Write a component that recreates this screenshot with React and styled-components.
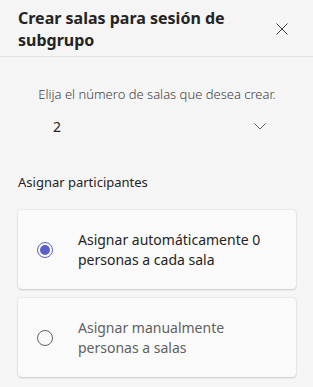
import React, { useState } from 'react';
import styled, { createGlobalStyle } from 'styled-components';

const GlobalStyle = createGlobalStyle`
  html, body {
    margin: 0;
    padding: 0;
    background: #f5f5f5;
  }
  body {
    font-family: "Noto Sans", "Open Sans", sans-serif;
    color: #242424;
  }
`;

const Panel = styled.div`
  width: 313px;
  height: 387px;
  background: #f5f5f5;
  overflow: hidden;
`;

const Header = styled.div`
  display: flex;
  align-items: flex-start;
  justify-content: space-between;
  height: 57px;
  box-sizing: border-box;
  padding: 7px 24px 0 18px;
  border-bottom: 1px solid #e0e0e0;
`;

const Title = styled.h1`
  margin: 0;
  font-size: 16px;
  font-weight: 700;
  line-height: 22px;
  width: 220px;
  color: #242424;
`;

const CloseButton = styled.button`
  border: 0;
  background: none;
  padding: 0;
  margin-top: 15px;
  width: 14px;
  height: 14px;
  display: flex;
  align-items: center;
  justify-content: center;
  cursor: pointer;
`;

const Body = styled.div`
  padding: 0 17px 0 18px;
`;

const Prompt = styled.p`
  margin: 28px 0 0;
  text-align: center;
  font-size: 13px;
  font-weight: 300;
  line-height: 18px;
  color: #424242;
`;

const Select = styled.div`
  display: flex;
  align-items: center;
  justify-content: space-between;
  margin: 13px 30px 0 35px;
  height: 20px;
  font-size: 14px;
  color: #242424;
`;

const SectionLabel = styled.div`
  margin-top: 37px;
  font-size: 13px;
  font-weight: 400;
  line-height: 18px;
  color: #242424;
`;

const Options = styled.div`
  display: flex;
  flex-direction: column;
  gap: 9px;
  margin-top: 19px;
`;

const Card = styled.label`
  display: flex;
  align-items: center;
  height: 79px;
  box-sizing: border-box;
  padding: 0 20px 0 19px;
  background: #fafafa;
  border-radius: 4px;
  box-shadow: 0 0 2px rgba(0, 0, 0, 0.12), 0 1px 2px rgba(0, 0, 0, 0.14);
  cursor: pointer;
`;

const Radio = styled.span`
  flex: none;
  width: 16px;
  height: 16px;
  box-sizing: border-box;
  border-radius: 50%;
  border: 1px solid ${(p) => (p.checked ? '#5b5fc7' : '#616161')};
  display: flex;
  align-items: center;
  justify-content: center;
  margin-right: 25px;
  &::after {
    content: '';
    width: 10px;
    height: 10px;
    border-radius: 50%;
    background: ${(p) => (p.checked ? '#5b5fc7' : 'transparent')};
  }
`;

const OptionText = styled.span`
  font-size: 14px;
  line-height: 20px;
  font-weight: 400;
  color: ${(p) => (p.checked ? '#242424' : '#616161')};
`;

const options = [
  { id: 'auto', label: ['Asignar automáticamente 0', 'personas a cada sala'] },
  { id: 'manual', label: ['Asignar manualmente', 'personas a salas'] },
];

export default function App() {
  const [choice, setChoice] = useState('auto');
  return (
    <Panel>
      <GlobalStyle />
      <Header>
        <Title>Crear salas para sesión de subgrupo</Title>
        <CloseButton aria-label="Cerrar">
          <svg width="12" height="12" viewBox="0 0 12 12">
            <path d="M0.5 0.5 L11.5 11.5 M11.5 0.5 L0.5 11.5" stroke="#424242" strokeWidth="1" />
          </svg>
        </CloseButton>
      </Header>
      <Body>
        <Prompt>Elija el número de salas que desea crear.</Prompt>
        <Select>
          <span>2</span>
          <svg width="12" height="7" viewBox="0 0 12 7">
            <path d="M0.5 0.5 L6 6 L11.5 0.5" stroke="#616161" strokeWidth="1" fill="none" />
          </svg>
        </Select>
        <SectionLabel>Asignar participantes</SectionLabel>
        <Options>
          {options.map((o) => (
            <Card key={o.id} onClick={() => setChoice(o.id)}>
              <Radio checked={choice === o.id} />
              <OptionText checked={choice === o.id}>
                {o.label[0]}
                <br />
                {o.label[1]}
              </OptionText>
            </Card>
          ))}
        </Options>
      </Body>
    </Panel>
  );
}
